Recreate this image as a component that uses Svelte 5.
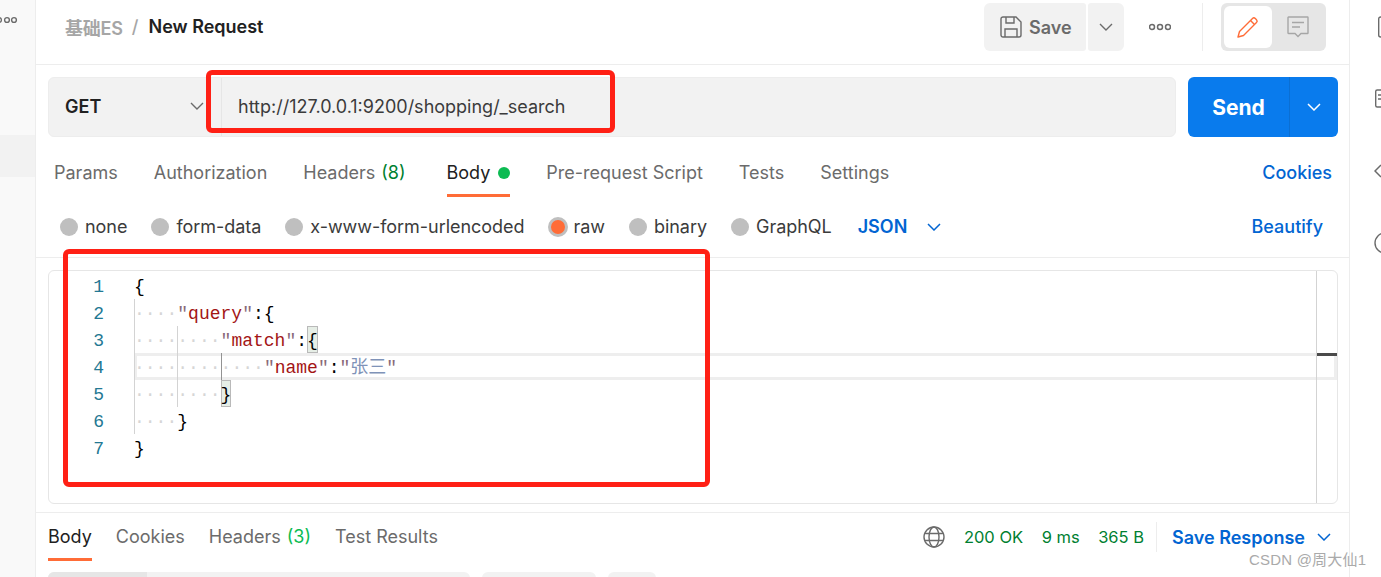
<script>
  const tabs = [
    { label: "Params" },
    { label: "Authorization" },
    { label: "Headers", count: "(8)" },
    { label: "Body", active: true, dot: true },
    { label: "Pre-request Script" },
    { label: "Tests" },
    { label: "Settings" },
  ];

  const bodyTypes = [
    { label: "none" },
    { label: "form-data" },
    { label: "x-www-form-urlencoded" },
    { label: "raw", selected: true },
    { label: "binary" },
    { label: "GraphQL" },
  ];

  const responseTabs = [
    { label: "Body", active: true },
    { label: "Cookies" },
    { label: "Headers", count: "(3)" },
    { label: "Test Results" },
  ];

  // guides = indent levels, open/close = bracket tokens around the key
  const lines = [
    { guides: 0, tail: "{" },
    { guides: 1, key: "query", tail: "{", colon: true },
    { guides: 2, key: "match", match: "{", colon: true },
    { guides: 3, key: "name", colon: true, value: "张三", current: true },
    { guides: 2, match: "}" },
    { guides: 1, tail: "}" },
    { guides: 0, tail: "}" },
  ];
</script>

<div class="page">
  <aside class="side">
    <svg class="side-more" width="18" height="8" viewBox="0 0 18 8" fill="none" stroke="#6b6b6b" stroke-width="1.4">
      <circle cx="-1" cy="4" r="2.4" /><circle cx="7" cy="4" r="2.4" /><circle cx="14" cy="4" r="2.4" />
    </svg>
    <div class="side-row"></div>
  </aside>

  <main class="main">
    <header class="head">
      <div class="crumbs">
        <span class="crumb-parent">基础ES</span>
        <span class="crumb-sep">/</span>
        <span class="crumb-name">New Request</span>
      </div>
      <div class="actions">
        <button class="save">
          <svg width="22" height="22" viewBox="0 0 22 22" fill="none" stroke="#6b6b6b" stroke-width="1.4">
            <path d="M3 1h13l5 5v13a2 2 0 0 1-2 2H3a2 2 0 0 1-2-2V3a2 2 0 0 1 2-2z" />
            <path d="M6 1v6h8V1M5 21v-8h12v8" />
          </svg>
          Save
        </button>
        <button class="save-more">
          <svg width="14" height="8" viewBox="0 0 14 8" fill="none" stroke="#6b6b6b" stroke-width="1.4"><path d="M1 1l6 6 6-6" /></svg>
        </button>
        <svg class="more" width="22" height="8" viewBox="0 0 22 8" fill="none" stroke="#6b6b6b" stroke-width="1.5">
          <circle cx="3" cy="4" r="2.5" /><circle cx="11" cy="4" r="2.5" /><circle cx="19" cy="4" r="2.5" />
        </svg>
        <span class="head-divider"></span>
        <div class="toggle">
          <span class="toggle-on">
            <svg width="22" height="22" viewBox="0 0 22 22" fill="none" stroke="#ff6c37" stroke-width="1.4" stroke-linejoin="round">
              <path d="M1 21l1.500-5.500L15.500 2.500a2 2 0 0 1 2.800 0l1.200 1.200a2 2 0 0 1 0 2.800L6.500 19.500z" />
              <path d="M13.500 4.500l4 4" />
            </svg>
          </span>
          <span class="toggle-off">
            <svg width="22" height="22" viewBox="0 0 22 22" fill="none" stroke="#a6a6a6" stroke-width="1.4">
              <path d="M1.500 1h19a.5.5 0 0 1 .5.5V17a.5.5 0 0 1-.5.5H14L11 20.500l-3-3H1.500A.5.5 0 0 1 1 17V1.500a.5.5 0 0 1 .5-.5z" />
              <path d="M5 6.500h12M5 11h8" />
            </svg>
          </span>
        </div>
      </div>
    </header>

    <section class="url-row">
      <div class="url-box">
        <div class="method">
          <span>GET</span>
          <svg width="14" height="8" viewBox="0 0 14 8" fill="none" stroke="#6b6b6b" stroke-width="1.4"><path d="M1 1l6 6 6-6" /></svg>
        </div>
        <div class="url">http://127.0.0.1:9200/shopping/_search</div>
      </div>
      <div class="send">
        <span class="send-label">Send</span>
        <span class="send-more">
          <svg width="14" height="8" viewBox="0 0 14 8" fill="none" stroke="#fff" stroke-width="1.5"><path d="M1 1l6 6 6-6" /></svg>
        </span>
      </div>
    </section>

    <nav class="tabs">
      {#each tabs as tab}
        <span class="tab" class:active={tab.active}>
          {tab.label}
          {#if tab.count}<span class="count">{tab.count}</span>{/if}
          {#if tab.dot}<span class="dot"></span>{/if}
        </span>
      {/each}
      <span class="link cookies">Cookies</span>
    </nav>

    <div class="types">
      {#each bodyTypes as type}
        <span class="type">
          <span class="radio" class:selected={type.selected}></span>
          {type.label}
        </span>
      {/each}
      <span class="json">JSON</span>
      <svg class="json-arrow" width="14" height="8" viewBox="0 0 14 8" fill="none" stroke="#0265d2" stroke-width="1.5"><path d="M1 1l6 6 6-6" /></svg>
      <span class="link beautify">Beautify</span>
    </div>

    <div class="editor">
      {#each lines as line, i}
        <div class="line">
          <span class="num">{i + 1}</span>
          <span class="code" class:current={line.current}>
            {#each Array(line.guides) as _, g}
              <span class="ind" class:ind-active={line.current && g === 2}>····</span>
            {/each}
            {#if line.key}<span class="q">"</span><span class="str">{line.key}</span><span class="q">"</span>{/if}
            {#if line.colon}<span class="punct">:</span>{/if}
            {#if line.value}<span class="q">"</span><span class="cjk">{line.value}</span><span class="q">"</span>{/if}
            {#if line.match}<span class="match">{line.match}</span>{/if}
            {#if line.tail}<span class="punct">{line.tail}</span>{/if}
          </span>
        </div>
      {/each}
      <div class="ruler"><span class="ruler-mark"></span></div>
    </div>

    <div class="res-bar">
      <div class="res-tabs">
        {#each responseTabs as tab}
          <span class="res-tab" class:active={tab.active}>
            {tab.label}
            {#if tab.count}<span class="res-count">{tab.count}</span>{/if}
          </span>
        {/each}
      </div>
      <div class="res-meta">
        <svg width="22" height="22" viewBox="0 0 22 22" fill="none" stroke="#6b6b6b" stroke-width="1.4">
          <circle cx="11" cy="11" r="10" />
          <ellipse cx="11" cy="11" rx="5" ry="10" />
          <path d="M2 7.500h18M2 14.500h18" />
        </svg>
        <span class="status">200 OK</span>
        <span class="status">9 ms</span>
        <span class="status">365 B</span>
        <span class="res-divider"></span>
        <span class="save-res">Save Response</span>
        <svg width="14" height="8" viewBox="0 0 14 8" fill="none" stroke="#0265d2" stroke-width="1.5"><path d="M1 1l6 6 6-6" /></svg>
      </div>
    </div>

    <div class="pills">
      <span class="pill pill-wide"><span class="pill-on"></span></span>
      <span class="pill pill-mid"></span>
      <span class="pill pill-small"></span>
    </div>
  </main>

  <aside class="rail">
    <svg width="22" height="22" viewBox="0 0 22 22" fill="none" stroke="#6b6b6b" stroke-width="1.4"><rect x="4.700" y="1" width="22" height="20" rx="2" /></svg>
    <svg width="22" height="22" viewBox="0 0 22 22" fill="none" stroke="#6b6b6b" stroke-width="1.4">
      <rect x="1.700" y="2" width="22" height="17" rx="1.500" /><path d="M4 7h3M4 11h3" />
    </svg>
    <svg width="22" height="22" viewBox="0 0 22 22" fill="none" stroke="#6b6b6b" stroke-width="1.5"><path d="M7 5l-6 6 6 6" /></svg>
    <svg width="22" height="22" viewBox="0 0 22 22" fill="none" stroke="#6b6b6b" stroke-width="1.4"><circle cx="11" cy="11" r="10" /></svg>
  </aside>

  <!-- red marks drawn on top of the screenshot -->
  <span class="mark mark-url"></span>
  <span class="mark mark-code"></span>
  <span class="watermark">CSDN @周大仙1</span>
</div>

<style>
  :global(body) {
    margin: 0;
    background: #fff;
  }

  .page {
    position: relative;
    display: flex;
    width: 1381px;
    height: 577px;
    overflow: hidden;
    font-family: Inter, "Noto Sans CJK SC", sans-serif;
    font-size: 18px;
    color: #212121;
  }

  .side {
    flex: none;
    box-sizing: border-box;
    width: 36px;
    padding-top: 16px;
    background: #f9f9f9;
    border-right: 1px solid #ededed;
  }

  .side-more {
    display: block;
  }

  .side-row {
    height: 42px;
    margin-top: 111px;
    background: #f2f2f2;
  }

  .main {
    flex: none;
    width: 1313px;
    display: flex;
    flex-direction: column;
  }

  .rail {
    flex: none;
    width: 32px;
    box-sizing: border-box;
    border-left: 1px solid #ededed;
    padding: 16px 0 0 24px;
    display: flex;
    flex-direction: column;
    gap: 50px;
  }

  .rail svg {
    flex: none;
  }

  /* header */
  .head {
    flex: none;
    box-sizing: border-box;
    height: 65px;
    padding: 3px 23px 13px 29px;
    border-bottom: 1px solid #ededed;
    display: flex;
    align-items: center;
    justify-content: space-between;
  }

  .crumbs {
    display: flex;
    align-items: center;
    font-weight: 600;
    margin-top: -1px;
  }

  .crumb-parent {
    color: #a6a6a6;
    letter-spacing: -0.2px;
  }

  .crumb-sep {
    color: #a6a6a6;
    margin: 0 10px 0 9px;
    font-weight: 500;
  }

  .actions {
    display: flex;
    align-items: center;
  }

  button {
    border: none;
    font: inherit;
    padding: 0;
  }

  .save {
    width: 102px;
    height: 48px;
    box-sizing: border-box;
    padding-left: 16px;
    background: #f2f2f2;
    border-radius: 6px 3px 3px 6px;
    color: #6b6b6b;
    font-weight: 600;
    display: flex;
    align-items: center;
    gap: 7px;
  }

  .save-more {
    width: 36px;
    height: 48px;
    margin-left: 2px;
    background: #f2f2f2;
    border-radius: 3px 6px 6px 3px;
    display: flex;
    align-items: center;
    justify-content: center;
  }

  .more {
    margin-left: 25px;
  }

  .head-divider {
    width: 1px;
    height: 48px;
    margin: 0 18px 0 31px;
    background: #ededed;
  }

  .toggle {
    width: 105px;
    height: 48px;
    box-sizing: border-box;
    padding: 3px;
    background: #e6e6e6;
    border-radius: 6px;
    display: flex;
  }

  .toggle-on,
  .toggle-off {
    width: 48px;
    height: 42px;
    display: flex;
    align-items: center;
    justify-content: center;
  }

  .toggle-on {
    background: #fff;
    border-radius: 6px;
  }

  .toggle-off {
    margin-left: 2px;
  }

  /* url row */
  .url-row {
    flex: none;
    display: flex;
    height: 60px;
    margin: 12px 11px 0 12px;
  }

  .url-box {
    width: 1128px;
    box-sizing: border-box;
    display: flex;
    background: #f2f2f2;
    border: 1px solid #ededed;
    border-radius: 6px;
  }

  .method {
    width: 173px;
    box-sizing: border-box;
    padding: 0 17px 2px 16px;
    border-right: 1px solid #e6e6e6;
    display: flex;
    align-items: center;
    justify-content: space-between;
    font-weight: 600;
  }

  .url {
    padding: 0 0 2px 16px;
    display: flex;
    align-items: center;
    color: #3b3b3b;
  }

  .send {
    width: 150px;
    margin-left: 12px;
    background: #097bed;
    border-radius: 6px;
    color: #fff;
    display: flex;
  }

  .send-label {
    width: 101px;
    box-sizing: border-box;
    display: flex;
    align-items: center;
    justify-content: center;
    font-size: 21px;
    font-weight: 700;
  }

  .send-more {
    flex: 1;
    border-left: 1px solid #0a6fd4;
    display: flex;
    align-items: center;
    justify-content: center;
  }

  /* request tabs */
  .tabs {
    flex: none;
    height: 48px;
    margin-top: 12px;
    padding: 0 17px 0 18px;
    display: flex;
    gap: 36px;
  }

  .tab {
    box-sizing: border-box;
    height: 48px;
    padding-bottom: 1px;
    display: flex;
    align-items: center;
    gap: 6px;
    color: #6b6b6b;
  }

  .tab.active {
    margin-left: 5px;
    gap: 8px;
    color: #212121;
    box-shadow: inset 0 -3px 0 #ff6c37;
  }

  .count {
    color: #007f31;
  }

  .dot {
    width: 12px;
    height: 12px;
    border-radius: 50%;
    background: #0cbb52;
  }

  .link {
    color: #0265d2;
    font-weight: 500;
  }

  .cookies {
    margin-left: auto;
    align-self: center;
    padding-bottom: 1px;
  }

  /* body type row */
  .types {
    flex: none;
    box-sizing: border-box;
    height: 61px;
    padding: 0 26px 1px 24px;
    border-bottom: 1px solid #ededed;
    display: flex;
    align-items: center;
    gap: 24px;
  }

  .type {
    display: flex;
    align-items: center;
    gap: 7px;
    color: #3b3b3b;
    letter-spacing: -0.04px;
  }

  .radio {
    box-sizing: border-box;
    width: 18px;
    height: 18px;
    border-radius: 50%;
    background: #bfbfbf;
  }

  .radio.selected {
    width: 20px;
    height: 20px;
    margin-right: -2px;
    background: #ff6c37;
    border: 3px solid #bfbfbf;
  }

  .json {
    color: #0265d2;
    font-weight: 600;
    margin-left: 2px;
  }

  .json-arrow {
    margin-left: -4px;
  }

  .beautify {
    margin-left: auto;
  }

  /* editor */
  .editor {
    flex: none;
    position: relative;
    box-sizing: border-box;
    height: 234px;
    margin: 12px 11px 0 12px;
    padding-top: 1px;
    border: 1px solid #e6e6e6;
    border-radius: 6px;
    font-family: "Liberation Mono", "Noto Sans CJK SC", monospace;
    font-size: 18px;
    line-height: 30px;
  }

  .line {
    display: flex;
    height: 27px;
  }

  .num {
    flex: none;
    box-sizing: border-box;
    width: 85px;
    padding-right: 30px;
    text-align: right;
    color: #237893;
  }

  .code {
    flex: 1;
    display: flex;
    white-space: pre;
    color: #000;
  }

  .code.current {
    box-shadow: inset 0 0 0 3px #eeeeee;
  }

  .ind {
    width: 43.300px;
    color: #d6d6d6;
    box-shadow: inset 1px 0 0 #d3d3d3;
  }

  .ind-active {
    box-shadow: inset 1px 0 0 #939393;
  }

  .str {
    color: #a31515;
  }

  .q {
    color: #8a6a7a;
  }

  .cjk {
    color: #7f93b8;
  }

  .match {
    background: #e6eee6;
    box-shadow: inset 0 0 0 1px #b9b9b9;
  }

  .ruler {
    position: absolute;
    top: 0;
    right: 0;
    bottom: 0;
    width: 20px;
    border-left: 1px solid #d3d3d3;
  }

  .ruler-mark {
    position: absolute;
    left: 0;
    right: 0;
    top: 82px;
    height: 3px;
    background: #4a4a4a;
  }

  /* response bar */
  .res-bar {
    flex: none;
    box-sizing: border-box;
    height: 50px;
    margin-top: 8px;
    padding: 0 18px 0 12px;
    border-top: 1px solid #ededed;
    display: flex;
    align-items: center;
    justify-content: space-between;
  }

  .res-tabs {
    display: flex;
    gap: 24px;
    align-self: flex-start;
  }

  .res-tab {
    box-sizing: border-box;
    height: 48px;
    padding-bottom: 1px;
    display: flex;
    align-items: center;
    gap: 6px;
    color: #6b6b6b;
  }

  .res-tab.active {
    color: #212121;
    box-shadow: inset 0 -3px 0 #ff6c37;
  }

  .res-count {
    color: #0cbb52;
  }

  .res-meta {
    display: flex;
    align-items: center;
    margin-top: -1px;
  }

  .status {
    color: #007f31;
    font-size: 16.500px;
    margin-left: 18.500px;
  }

  .res-divider {
    width: 1px;
    height: 30px;
    margin: 0 15px 0 12px;
    background: #ededed;
  }

  .save-res {
    color: #0265d2;
    font-weight: 600;
    margin-right: 12px;
  }

  /* response toolbar, cut off by the window */
  .pills {
    flex: none;
    margin: 10px 0 0 12px;
    display: flex;
  }

  .pill {
    height: 24px;
    background: #f2f2f2;
    border-radius: 6px;
    overflow: hidden;
  }

  .pill-wide {
    width: 422px;
  }

  .pill-on {
    display: block;
    width: 99px;
    height: 100%;
    background: #e6e6e6;
  }

  .pill-mid {
    width: 114px;
    margin-left: 12px;
  }

  .pill-small {
    width: 48px;
    margin-left: 12px;
  }

  /* annotations */
  .mark {
    position: absolute;
    box-sizing: border-box;
    border: 5px solid #ff2015;
    border-radius: 6px;
  }

  .mark-url {
    left: 206px;
    top: 70px;
    width: 409px;
    height: 63px;
  }

  .mark-code {
    left: 63px;
    top: 249px;
    width: 647px;
    height: 238px;
  }

  .watermark {
    position: absolute;
    left: 1249px;
    top: 550px;
    font-family: "Liberation Sans", "Noto Sans CJK SC", sans-serif;
    font-size: 15px;
    line-height: 20px;
    letter-spacing: 0.2px;
    color: #aaa;
    white-space: nowrap;
  }
</style>
